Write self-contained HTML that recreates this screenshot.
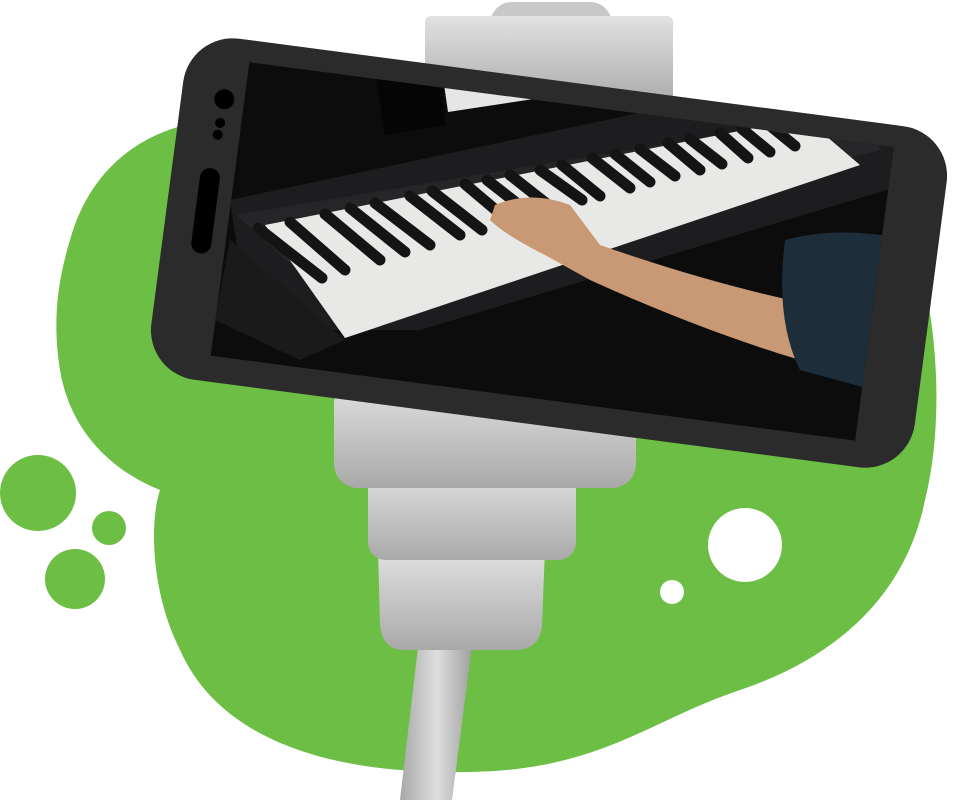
<!DOCTYPE html>
<html><head><meta charset="utf-8"><style>html,body{margin:0;padding:0;background:#fff}svg{display:block}</style></head>
<body>
<svg width="959" height="800" viewBox="0 0 959 800" xmlns="http://www.w3.org/2000/svg">
<defs>
<linearGradient id="g1" x1="0" y1="0" x2="0" y2="1"><stop offset="0" stop-color="#e2e2e2"/><stop offset="1" stop-color="#a9a9a9"/></linearGradient>
<linearGradient id="g2" x1="0" y1="0" x2="1" y2="0"><stop offset="0" stop-color="#a8a8a8"/><stop offset=".5" stop-color="#dedede"/><stop offset="1" stop-color="#9c9c9c"/></linearGradient>
<clipPath id="scr"><rect x="-322" y="-150" width="650" height="296" transform="translate(549,253) rotate(7.5)"/></clipPath>
</defs>
<path fill="#6dbe45" d="M70 240 C95 150 170 115 245 120 L900 200 C940 300 945 420 925 500 C905 600 830 660 740 690 C650 720 600 770 470 772 C330 775 220 740 180 650 C150 590 150 520 160 490 C110 470 70 430 60 370 C52 320 58 280 70 240 Z"/>
<circle cx="38" cy="493" r="38" fill="#6dbe45"/>
<circle cx="109" cy="528" r="17" fill="#6dbe45"/>
<circle cx="75" cy="579" r="30" fill="#6dbe45"/>
<circle cx="745" cy="545" r="37" fill="#fff"/>
<circle cx="672" cy="592" r="12" fill="#fff"/>
<polygon points="420,630 474,630 452,800 400,800" fill="url(#g2)"/>
<rect x="490" y="2" width="122" height="50" rx="22" fill="#c8c8c8"/>
<rect x="425" y="16" width="248" height="90" rx="6" fill="url(#g1)"/>
<rect x="395" y="450" width="168" height="30" fill="#111"/>
<rect x="412" y="535" width="136" height="22" fill="#111"/>
<path d="M378 548 L545 548 L542 625 Q540 650 515 650 L405 650 Q382 650 380 625 Z" fill="url(#g1)"/>
<rect x="368" y="468" width="208" height="92" rx="18" fill="url(#g1)"/>
<rect x="334" y="380" width="302" height="108" rx="24" fill="url(#g1)"/>
<g transform="translate(549,253) rotate(7.5)">
<rect x="-385" y="-172" width="770" height="344" rx="50" fill="#2b2b2b"/>
<circle cx="-342" cy="-110" r="10" fill="#000"/>
<circle cx="-343" cy="-86" r="5" fill="#000"/>
<circle cx="-344" cy="-74" r="5" fill="#000"/>
<rect x="-356" y="-40" width="20" height="86" rx="10" fill="#000"/>
</g>
<g clip-path="url(#scr)">
<rect x="150" y="0" width="800" height="500" fill="#0c0c0c"/>
<polygon points="370,40 440,50 445,125 385,135" fill="#050505"/>
<polygon points="230,200 700,100 920,120 920,180 420,330 250,330" fill="#1d1d1f"/>
<polygon points="442,70 535,78 540,98 448,112" fill="#e6e6e6"/>
<polygon points="236,215 870,110 880,150 320,290" fill="#262628"/>
<polygon points="265,225 805,118 860,165 345,338" fill="#e8e8e6"/>
<g stroke="#141414" stroke-width="11" stroke-linecap="round">
<line x1="258" y1="228" x2="322" y2="278"/><line x1="290" y1="222" x2="345" y2="270"/>
<line x1="325" y1="214" x2="380" y2="260"/><line x1="350" y1="208" x2="405" y2="252"/>
<line x1="375" y1="203" x2="430" y2="245"/><line x1="410" y1="196" x2="460" y2="235"/>
<line x1="432" y1="191" x2="482" y2="230"/><line x1="465" y1="184" x2="510" y2="222"/>
<line x1="487" y1="180" x2="532" y2="215"/><line x1="510" y1="175" x2="552" y2="208"/>
<line x1="540" y1="170" x2="582" y2="200"/><line x1="562" y1="165" x2="600" y2="196"/>
<line x1="592" y1="158" x2="630" y2="188"/><line x1="615" y1="154" x2="650" y2="182"/>
<line x1="640" y1="149" x2="675" y2="176"/><line x1="668" y1="143" x2="700" y2="170"/>
<line x1="690" y1="139" x2="722" y2="164"/><line x1="720" y1="133" x2="748" y2="158"/>
<line x1="742" y1="129" x2="770" y2="152"/><line x1="768" y1="124" x2="795" y2="146"/>
</g>
<polygon points="230,240 345,340 300,360 215,320" fill="#1a1a1a"/>
<path d="M495 205 Q530 190 570 205 L600 245 Q700 280 790 300 L800 360 Q700 330 590 280 L545 255 Q505 235 490 220 Z" fill="#c99874"/>
<path d="M785 240 Q840 225 910 240 L910 400 L800 370 Q775 320 785 240 Z" fill="#1d2d3a"/>
</g>
</svg>
</body></html>
